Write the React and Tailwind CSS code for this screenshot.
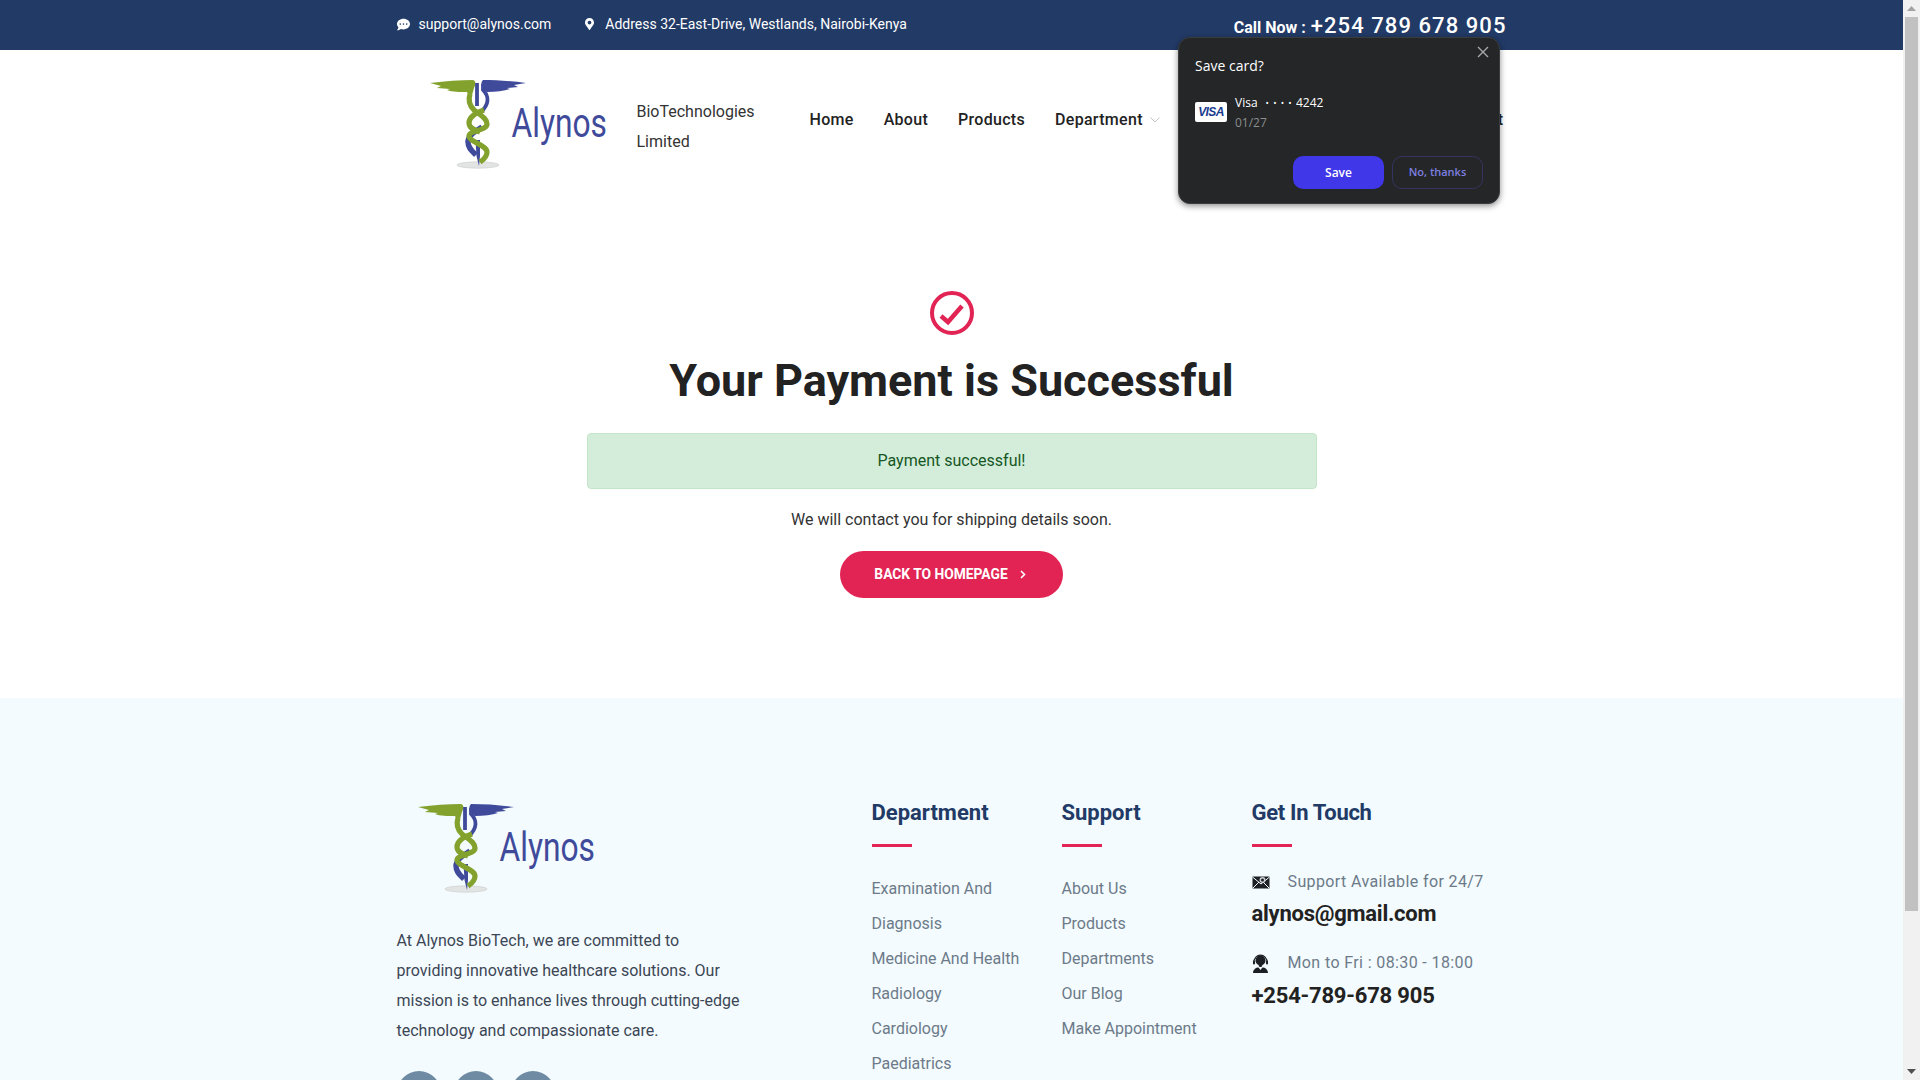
import React from "react";
import { FaCommentDots, FaMapMarkerAlt } from "react-icons/fa";

function Logo({ className = "" }) {
  const green = "#82a12d";
  const blue = "#3f4a9b";
  return (
    <svg viewBox="0 0 180 92" className={`overflow-visible ${className}`}>
      <ellipse cx="48" cy="85" rx="21" ry="3.2" fill="#e2e3e3" stroke="#c9cbcb" strokeWidth="0.6" />
      <path d="M0 3 C16 1 30 0 43 0 C46 1 46 4 44 8 L42 15 L38 14 L37 12 C30 12 22 12 17 10 L20 9 L7 8 L11 6 Z" fill={green} />
      <path d="M96 3 C82 1 66 0 53 0 C51 2 51 5 52 8 L57 12 C66 12 74 11 80 9 L77 8 L88 7 L84 5 Z" fill={blue} />
      <path d="M47 3 L47 26 M53 4 L53 10 C59 16 60 24 50 33" fill="none" stroke={blue} strokeWidth="3.8" />
      <path d="M52 47 C44 52 38 56 38 62 C38 68 42 71 46 75" fill="none" stroke={blue} strokeWidth="5.400" />
      <path d="M45.500 60 L50 60 L50 76 L49 86 L46.500 76 Z" fill={blue} />
      <path d="M40 14 C38 20 39 25 44 30 C50 35 57 38 57 44 C57 51 39 50 39 56 C39 62 57 65 57 72 C57 77 53 80 50 82" fill="none" stroke={green} strokeWidth="5.200" />
      <path d="M54 30 C42 34 39 38 39 43 C39 48 44 50 50 52" fill="none" stroke={green} strokeWidth="5.200" />
      <text x="81.500" y="57" fill={blue} fontFamily="Roboto, sans-serif" fontSize="41" textLength="95.500" lengthAdjust="spacingAndGlyphs">Alynos</text>
    </svg>
  );
}

function Chevron() {
  return (
    <svg width="10" height="6" viewBox="0 0 10 6" fill="none" stroke="#b5b5b5" strokeWidth="0.8">
      <path d="M0.5 0.5 L5 5 L9.5 0.5" />
    </svg>
  );
}

function EnvelopeIcon() {
  return (
    <svg width="18" height="13" viewBox="0 0 18 13">
      <rect x="0.5" y="0.5" width="17" height="12" fill="#1c1f24" />
      <path d="M0.5 12.5 L7 6 M17.5 12.5 L11 6 M0.5 1 L9 8 L17.5 1" fill="none" stroke="#f3fbfe" strokeWidth="1" />
      <circle cx="10.500" cy="4" r="3" fill="#c8ccd0" />
      <circle cx="10.500" cy="4" r="1.500" fill="#1c1f24" />
    </svg>
  );
}

function AgentIcon() {
  return (
    <svg width="17" height="19" viewBox="0 0 17 19">
      <path d="M1.800 9 C1.800 -1.500 15.200 -1.500 15.200 9" fill="none" stroke="#1c1f24" strokeWidth="1.200" />
      <circle cx="8.500" cy="6.500" r="5" fill="#1c1f24" />
      <rect x="1" y="6.500" width="2" height="4" rx="1" fill="#1c1f24" />
      <rect x="14" y="6.500" width="2" height="4" rx="1" fill="#1c1f24" />
      <path d="M1 19 C1 15.500 4 13.500 6.500 13.500 L8.500 16 L10.500 13.500 C13 13.500 16 15.500 16 19 Z" fill="#1c1f24" />
      <path d="M6.500 11 L10.500 11 L9.500 13 L7.500 13 Z" fill="#1c1f24" />
    </svg>
  );
}

function VisaCard() {
  return (
    <div className="w-8 h-5 mb-[2px] bg-white rounded-[2px] flex items-center justify-center">
      <span className="text-[#1a3c8f] text-[12px] font-bold italic tracking-[-0.6px] font-['Liberation_Sans',sans-serif]">VISA</span>
    </div>
  );
}

function SavePopup() {
  return (
    <div className="absolute left-[1178px] top-[37px] w-[322px] h-[167px] bg-[#242627] rounded-xl shadow-[0_2px_6px_rgba(0,0,0,0.45)] border border-[#3a3c3e] font-['Open_Sans',sans-serif] text-white">
      <svg className="absolute right-[10px] top-[8px]" width="12" height="12" viewBox="0 0 12 12" stroke="#a8a8a8" strokeWidth="1.4">
        <path d="M1 1 L11 11 M11 1 L1 11" />
      </svg>
      <div className="pt-[18px] pl-4 text-sm leading-5">Save card?</div>
      <div className="flex items-center gap-2 pl-4 mt-[16px]">
        <VisaCard />
        <div className="flex flex-col mt-[1px]">
          <div className="flex items-center text-xs leading-5">
            <span>Visa</span>
            <span className="ml-2 text-[9px] tracking-[4.2px]">••••</span>
            <span>4242</span>
          </div>
          <div className="text-xs leading-5 text-[#8b8d8f]">01/27</div>
        </div>
      </div>
      <div className="flex justify-end gap-2 pr-4 mt-[23px]">
        <button className="w-[91px] h-[33px] rounded-[10px] bg-[#3f37e8] text-xs font-semibold text-white">Save</button>
        <button className="w-[91px] h-[33px] rounded-[10px] border border-[#34345e] text-[11px] font-semibold text-[#7e7fe0]">No, thanks</button>
      </div>
    </div>
  );
}

const heading = "font-['Roboto',sans-serif] font-bold";

function FooterList({ title, items }) {
  return (
    <div className="w-[190px] shrink-0">
      <h3 className={`${heading} text-[22px] leading-[30px] text-[#223a66] mt-[-1px]`}>{title}</h3>
      <div className="w-10 h-[3px] bg-[#e12454] mt-[16px] mb-[24px]" />
      <ul className="text-base leading-[35px] w-[150px]">
        {items.map((t) => (
          <li key={t} className="text-[#6c7a89]">{t}</li>
        ))}
      </ul>
    </div>
  );
}

export default function App() {
  return (
    <div className="h-[1080px] overflow-hidden flex bg-white font-['Roboto',sans-serif] relative">
      <div className="flex-1 min-w-0">
        <div className="h-[50px] bg-[#223a66] text-white">
          <div className="w-[1140px] mx-auto px-[15px] h-full flex items-center text-sm">
            <FaCommentDots className="w-[13px] h-[13px] mb-[2px]" />
            <span className="ml-[9px] mb-[2px]">support@alynos.com</span>
            <FaMapMarkerAlt className="w-[11px] h-[12px] ml-[33px] mb-[2px]" />
            <span className="ml-[10px] mb-[2px]">Address 32-East-Drive, Westlands, Nairobi-Kenya</span>
            <div className="ml-auto flex items-baseline font-bold mt-[1px]">
              <span className="text-base">Call Now :</span>
              <span className="text-[22px] tracking-[1.07px] font-medium ml-[5px]">+254 789 678 905</span>
            </div>
          </div>
        </div>

        <div className="w-[1140px] mx-auto px-[15px] h-[160px] flex items-start">
          <Logo className="w-[180px] h-[92px] mt-[30px] ml-[33px] shrink-0" />
          <div className="ml-[27px] mt-[47px] text-base leading-[30px] text-[#333] w-[170px] shrink-0">
            BioTechnologies<br />Limited
          </div>
          <nav className={`${heading} flex items-center gap-[30px] mt-[58px] text-base font-medium text-[#222] tracking-[0.3px] ml-[3px] flex-1`}>
            <span>Home</span>
            <span>About</span>
            <span>Products</span>
            <span className="flex items-center gap-[7px]">Department <Chevron /></span>
            <span className="ml-auto mr-[3px]">Contact</span>
          </nav>
        </div>

        <main className="h-[488px] flex flex-col items-center">
          <div className="mt-[81px] w-11 h-11 rounded-full border-[4px] border-[#e12454] flex items-center justify-center">
            <svg width="30" height="26" viewBox="0 0 30 26" fill="none" stroke="#e12454" strokeWidth="4.5">
              <path d="M4 16 L11 22 L25 6" />
            </svg>
          </div>
          <h1 className={`${heading} text-[45px] leading-[54px] text-[#222] mt-[19px]`}>Your Payment is Successful</h1>
          <div className="mt-[25px] w-[730px] h-[56px] rounded bg-[#d4edda] border border-[#c3e6cb] text-[#155724] text-base flex items-center justify-center">
            Payment successful!
          </div>
          <p className="mt-[19px] text-base leading-6 text-[#333]">We will contact you for shipping details soon.</p>
          <button className={`${heading} mt-[19px] w-[223px] h-[47px] pr-[3px] rounded-full bg-[#e12454] text-white text-[13.8px] flex items-center justify-center gap-[12px]`}>
            BACK TO HOMEPAGE
            <svg width="6" height="9" viewBox="0 0 6 9" fill="none" stroke="#fff" strokeWidth="1.6"><path d="M1 1 L4.500 4.500 L1 8" /></svg>
          </button>
        </main>

        <footer className="h-[382px] bg-[#f3fbfe]">
          <div className="w-[1140px] mx-auto px-[15px] flex pt-[101px]">
            <div className="w-[475px] shrink-0">
              <Logo className="w-[180px] h-[92px] ml-[21px] mt-[5px]" />
              <p className="mt-[30px] w-[345px] text-base leading-[30px] text-[#3c4655]">
                At Alynos BioTech, we are committed to providing innovative healthcare solutions. Our mission is to enhance lives through cutting-edge technology and compassionate care.
              </p>
              <div className="flex mt-[25px] gap-[13px]">
                <div className="w-11 h-11 rounded-full bg-[#6f8ba4]" />
                <div className="w-11 h-11 rounded-full bg-[#6f8ba4]" />
                <div className="w-11 h-11 rounded-full bg-[#6f8ba4]" />
              </div>
            </div>
            <FooterList title="Department" items={["Examination And Diagnosis", "Medicine And Health", "Radiology", "Cardiology", "Paediatrics"]} />
            <FooterList title="Support" items={["About Us", "Products", "Departments", "Our Blog", "Make Appointment"]} />
            <div className="flex-1">
              <h3 className={`${heading} text-[22px] leading-[30px] text-[#223a66] mt-[-1px] tracking-[-0.3px]`}>Get In Touch</h3>
              <div className="w-10 h-[3px] bg-[#e12454] mt-[16px] mb-[23px]" />
              <div className="flex items-center h-6 text-base text-[#6c7a89] tracking-[0.38px]">
                <span className="w-9 shrink-0"><EnvelopeIcon /></span>Support Available for 24/7
              </div>
              <div className={`${heading} text-[22px] leading-8 text-[#222] mt-[4px] tracking-[-0.25px]`}>alynos@gmail.com</div>
              <div className="flex items-center h-6 text-base text-[#6c7a89] tracking-[0.38px] mt-[21px]">
                <span className="w-9 shrink-0"><AgentIcon /></span>Mon to Fri : 08:30 - 18:00
              </div>
              <div className={`${heading} text-[22px] leading-8 text-[#222] mt-[5px] tracking-[-0.2px]`}>+254-789-678 905</div>
            </div>
          </div>
        </footer>
      </div>

      <div className="w-[17px] shrink-0 h-[1080px] bg-[#f1f1f1] flex flex-col items-center">
        <div className="h-[17px] flex items-center justify-center shrink-0">
          <svg width="9" height="5" viewBox="0 0 9 5"><path d="M4.500 0 L9 5 L0 5 Z" fill="#a3a3a3" /></svg>
        </div>
        <div className="w-[13px] h-[894px] bg-[#c1c1c1] shrink-0" />
        <div className="flex-1" />
        <div className="h-[17px] flex items-center justify-center shrink-0">
          <svg width="9" height="5" viewBox="0 0 9 5"><path d="M0 0 L9 0 L4.500 5 Z" fill="#505050" /></svg>
        </div>
      </div>

      <SavePopup />
    </div>
  );
}
